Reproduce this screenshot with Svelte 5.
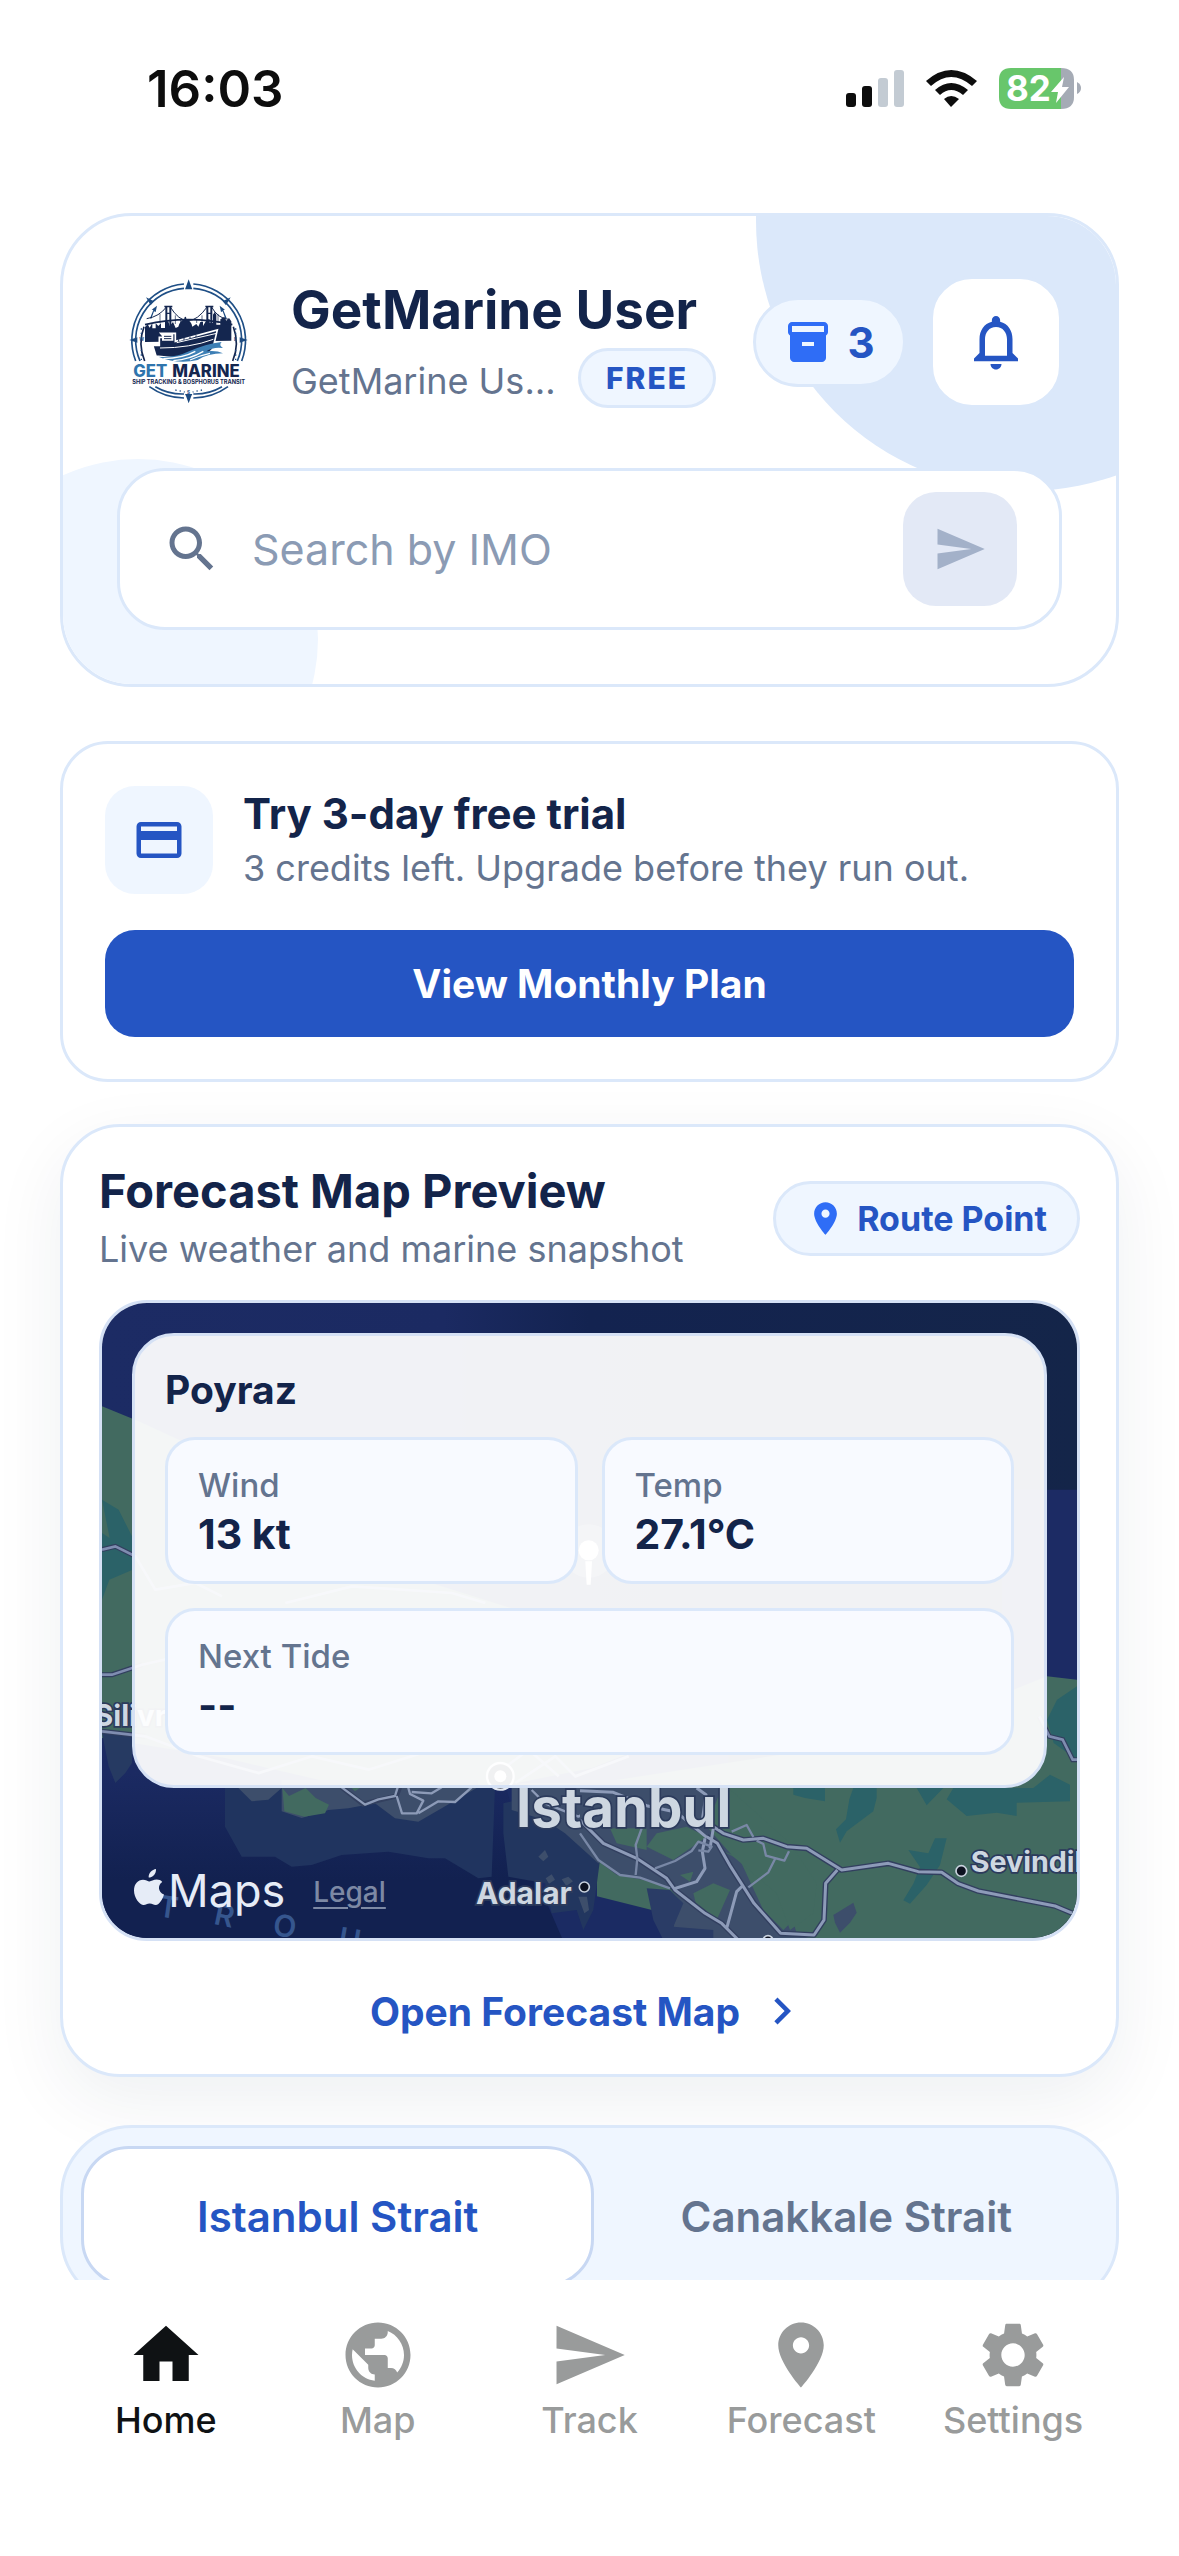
<script>
  const navItems = [
    { label: 'Home', icon: 'M10 20v-6h4v6h5v-8h3L12 3 2 12h3v8z' },
    {
      label: 'Map',
      icon: 'M12 2C6.48 2 2 6.48 2 12s4.48 10 10 10 10-4.48 10-10S17.52 2 12 2zm-1 17.93c-3.95-.49-7-3.85-7-7.93 0-.62.08-1.21.21-1.79L9 15v1c0 1.1.9 2 2 2v1.93zm6.9-2.54c-.26-.81-1-1.39-1.9-1.39h-1v-3c0-.55-.45-1-1-1H8v-2h2c.55 0 1-.45 1-1V7h2c1.1 0 2-.9 2-2v-.41c2.93 1.19 5 4.06 5 7.41 0 2.08-.8 3.97-2.1 5.39z'
    },
    { label: 'Track', icon: 'M2.01 21L23 12 2.01 3 2 10l15 2-15 2z' },
    {
      label: 'Forecast',
      icon: 'M12 2C8.13 2 5 5.13 5 9c0 5.25 7 13 7 13s7-7.75 7-13c0-3.87-3.13-7-7-7zm0 9.5c-1.38 0-2.5-1.12-2.5-2.5s1.12-2.5 2.5-2.5 2.5 1.12 2.5 2.5-1.12 2.5-2.5 2.5z'
    },
    {
      label: 'Settings',
      icon: 'M19.14 12.94c.04-.3.06-.61.06-.94 0-.32-.02-.64-.07-.94l2.03-1.58c.18-.14.23-.41.12-.61l-1.92-3.32c-.12-.22-.37-.29-.59-.22l-2.39.96c-.5-.38-1.03-.7-1.62-.94l-.36-2.54c-.04-.24-.24-.41-.48-.41h-3.84c-.24 0-.43.17-.47.41l-.36 2.54c-.59.24-1.13.57-1.62.94l-2.39-.96c-.22-.08-.47 0-.59.22L2.74 8.87c-.12.21-.08.47.12.61l2.03 1.58c-.05.3-.09.63-.09.94s.02.64.07.94l-2.03 1.58c-.18.14-.23.41-.12.61l1.92 3.32c.12.22.37.29.59.22l2.39-.96c.5.38 1.03.7 1.62.94l.36 2.54c.05.24.24.41.48.41h3.84c.24 0 .44-.17.47-.41l.36-2.54c.59-.24 1.13-.56 1.62-.94l2.39.96c.22.08.47 0 .59-.22l1.92-3.32c.12-.22.07-.47-.12-.61l-2.01-1.58zM12 15.6c-1.98 0-3.6-1.62-3.6-3.6s1.62-3.6 3.6-3.6 3.6 1.62 3.6 3.6-1.62 3.6-3.6 3.6z'
    }
  ];

  const straits = ['Istanbul Strait', 'Canakkale Strait'];

  const readings = [
    { label: 'Wind', value: '13 kt' },
    { label: 'Temp', value: '27.1°C' },
    { label: 'Next Tide', value: '--', wide: true }
  ];

  let activeTab = 'Home';
  let activeStrait = 'Istanbul Strait';
  let imo = '';
</script>

<div class="app">
  <div class="status-bar">
    <span class="time">16:03</span>
    <svg class="status-icons" viewBox="0 0 240 42" aria-hidden="true">
      <rect x="0" y="25" width="10" height="14" rx="3" fill="#0d0d0d" />
      <rect x="16" y="18" width="10" height="21" rx="3" fill="#0d0d0d" />
      <rect x="32" y="10" width="10" height="29" rx="3" fill="#c3cbd3" />
      <rect x="48" y="2" width="10" height="37" rx="3" fill="#c3cbd3" />
      <g fill="#0d0d0d">
        <path d="M80 13Q105-9 131 13L126 18Q105 0 85 18z" />
        <path d="M89 22Q105 8 122 22L117 27Q105 17 94 27z" />
        <path d="M98 31Q105 25 113 31L105 39z" />
      </g>
      <path d="M165 0h50v41h-50q-12 0-12-12V12q0-12 12-12z" fill="#68c66b" />
      <path d="M215 0q13 0 13 12v17q0 12-13 12z" fill="#a5abb5" />
      <path d="M231 14q4 2 4 6t-4 6z" fill="#a5abb5" />
      <text x="160" y="33" class="battery-text">82</text>
      <path d="M218 9l-13 15h7l-2 11 13-16h-7z" fill="#fff" />
    </svg>
  </div>

  <main>
    <header class="card profile">
      <div class="blob blob-top"></div>
      <div class="blob blob-bottom"></div>

      <div class="profile-row">
        <svg class="avatar" viewBox="21 30 432 432" role="img" aria-label="Get Marine">
          <g fill="none" stroke="#1f4f86" stroke-width="5">
            <path d="M77 303A170 170 0 0 1 222 72M250 72A170 170 0 0 1 395 303" />
            <path d="M90 303A156 156 0 0 1 222 85M250 85A156 156 0 0 1 382 303" />
            <path d="M118 380A180 180 0 0 0 222 414M250 414A180 180 0 0 0 354 380" />
            <path d="M136 380A160 160 0 0 0 222 402M250 402A160 160 0 0 0 336 380" />
            <path d="M104 303A140 140 0 0 1 102 200M368 303A140 140 0 0 0 370 200" stroke="#14264f" />
          </g>
          <g fill="#1c4a80">
            <path d="M236 58l8 22 3 8h-22l3-8zM236 430l-8-22-3-6h22l-3 6zM58 240l24-8v16zM413 240l-24-8v16z" />
            <path d="M108 112l24 12-10 12zM362 112l-24 12 10 12zM120 175l10-25-5-1 16-12-4 19-5-2-8 22zM350 175l-10-25 5-1-16-12 4 19 5-2 8 22z" />
          </g>
          <g fill="#14264f">
            <path d="M105 246v-45l8-8 6 10 8-14v16h10v-15l8 8 8-8v14h12v-20h10l4 14 10-12 8 18 8-4q5-18 18-22v-4q3-8 6 0v4q14 4 18 22l12-8 6 8 6-14h8v12l12-20h8v10h10v-24l5-8 5 8v30h12v-16l12-8 6 12 8-8 7 10v58z" />
            <path d="M166 140h6v70h-6zM178 140h6v70h-6zM289 140h6v70h-6zM301 140h6v70h-6zM163 137h24v5h-24zM286 137h24v5h-24zM172 158h8v4h-8zM295 158h8v4h-8z" />
          </g>
          <path d="M110 176q38-6 60-36M180 140q52 84 112 0M304 140q20 36 52 38" fill="none" stroke="#14264f" stroke-width="3" />
          <path d="M105 194q130-30 262 0" fill="none" stroke="#14264f" stroke-width="5" />
          <path d="M196 166v26M212 177v12M236 182v6M260 177v12M276 166v26M150 162v28M324 162v28" stroke="#14264f" stroke-width="2" />
          <path d="M128 256h20v-24h14l-10-12h44v24l126-34-14 58q-22 28-70 30l-100-10z" fill="#14264f" stroke="#fff" stroke-width="5" />
          <path d="M156 222h34v20h-34z" fill="#fff" />
          <path d="M162 229h22M162 236h22M206 238v16M222 234v16M240 230v16M258 226v16" stroke="#14264f" stroke-width="3" />
          <path d="M200 248l120-28M150 264q90 0 160-26" stroke="#fff" stroke-width="3" fill="none" />
          <path d="M145 290q52 4 92-16 50-22 98-28-10 10 4 18-30-4-50 10 30-4 50 6-46 0-76 20-60 14-118-10z" fill="#3d7fb5" />
          <path d="M160 296q60-2 96-22M190 302q50-4 90-28M240 300q30-14 60-20" stroke="#fff" stroke-width="4" fill="none" />
          <text x="70" y="350" class="logo-name" fill="#2f75ad">GET</text>
          <text x="187" y="350" class="logo-name" fill="#14264f">MARINE</text>
          <text x="236" y="373" class="logo-tag" text-anchor="middle">SHIP TRACKING &amp; BOSPHORUS TRANSIT</text>
          <g class="logo-mark">
            <text x="88" y="244">W</text>
            <text x="372" y="244">E</text>
            <text x="231" y="402">S</text>
          </g>
          <g fill="none" stroke="#1c4a80" stroke-width="4" stroke-dasharray="4 9">
            <path d="M94 270v30M94 205v24M377 270v30M377 205v24M196 390l28 6M276 390l-28 6" />
          </g>
        </svg>

        <div class="identity">
          <h1>GetMarine User</h1>
          <div class="plan-row">
            <span class="username">GetMarine User</span>
            <span class="badge">FREE</span>
          </div>
        </div>

        <button class="credits" type="button" aria-label="3 credits">
          <svg viewBox="0 0 24 24" aria-hidden="true">
            <path d="M20 2H4c-1 0-2 .9-2 2v3.01c0 .72.43 1.34 1 1.69V20c0 1.1 1.1 2 2 2h14c.9 0 2-.9 2-2V8.7c.57-.35 1-.97 1-1.69V4c0-1.1-1-2-2-2zm-5 12H9v-2h6v2zm5-7H4V4h16v3z" />
          </svg>
          <span>3</span>
        </button>

        <button class="bell" type="button" aria-label="Notifications">
          <svg viewBox="0 0 24 24" aria-hidden="true">
            <path d="M12 22c1.1 0 2-.9 2-2h-4c0 1.1.9 2 2 2zm6-6v-5c0-3.07-1.63-5.64-4.5-6.32V4c0-.83-.67-1.5-1.5-1.5s-1.5.67-1.5 1.5v.68C7.64 5.36 6 7.92 6 11v5l-2 2v1h16v-1l-2-2zm-2 1H8v-6c0-2.48 1.51-4.5 4-4.5s4 2.02 4 4.5v6z" />
          </svg>
        </button>
      </div>

      <form class="search" on:submit|preventDefault>
        <svg class="search-icon" viewBox="0 0 24 24" aria-hidden="true">
          <path d="M15.5 14h-.79l-.28-.27C15.41 12.59 16 11.11 16 9.5 16 5.91 13.09 3 9.5 3S3 5.91 3 9.5 5.91 16 9.5 16c1.61 0 3.09-.59 4.23-1.57l.27.28v.79l5 4.99L20.49 19l-4.99-5zm-6 0C7.01 14 5 11.99 5 9.5S7.01 5 9.5 5 14 7.01 14 9.5 11.99 14 9.5 14z" />
        </svg>
        <input type="text" placeholder="Search by IMO" aria-label="Search by IMO" bind:value={imo} />
        <button class="send" type="submit" aria-label="Search">
          <svg viewBox="0 0 24 24" aria-hidden="true">
            <path d="M2.01 21L23 12 2.01 3 2 10l15 2-15 2z" />
          </svg>
        </button>
      </form>
    </header>

    <section class="card trial">
      <div class="trial-row">
        <div class="trial-icon">
          <svg viewBox="0 0 24 24" aria-hidden="true">
            <path d="M20 4H4c-1.11 0-1.99.89-1.99 2L2 18c0 1.11.89 2 2 2h16c1.11 0 2-.89 2-2V6c0-1.11-.89-2-2-2zm0 14H4v-6h16v6zm0-10H4V6h16v2z" />
          </svg>
        </div>
        <div>
          <h2>Try 3-day free trial</h2>
          <p>3 credits left. Upgrade before they run out.</p>
        </div>
      </div>
      <button class="primary" type="button">View Monthly Plan</button>
    </section>

    <section class="card forecast">
      <div class="forecast-head">
        <div>
          <h2>Forecast Map Preview</h2>
          <p>Live weather and marine snapshot</p>
        </div>
        <button class="route-point" type="button">
          <svg viewBox="0 0 24 24" aria-hidden="true"><path d={navItems[3].icon} /></svg>
          Route Point
        </button>
      </div>

      <div class="map">
        <svg class="map-art" viewBox="0 0 2925 1905" preserveAspectRatio="xMidYMid slice" aria-hidden="true">
          <defs>
            <linearGradient id="sea" x1="0" y1="0" x2="1" y2="0">
              <stop offset="0" stop-color="#1c2b64" />
              <stop offset="0.35" stop-color="#1b2a62" />
              <stop offset="0.5" stop-color="#132350" />
              <stop offset="1" stop-color="#142549" />
            </linearGradient>
            <linearGradient id="deep" x1="0" y1="0" x2="0" y2="1">
              <stop offset="0" stop-color="#1c2b64" />
              <stop offset="0.3" stop-color="#1b2a62" />
              <stop offset="0.75" stop-color="#122150" />
            </linearGradient>
          </defs>
          <rect width="2925" height="1905" fill="url(#sea)" />
          <path d="M2700 560h225v700h-225z" fill="#1c2b64" />
          <path d="M0 1200h1500v705H0z" fill="url(#deep)" />
          <path d="M1180 1350h700v555h-500l-100-230z" fill="#1b2b63" />

          <!-- European side -->
          <path d="M0 310l110 45 130 60 400 260 300 150 350 110 200-20 60 120 20 320-100 40-300 60-500-20-300-70-370-60z" fill="#426a60" />
          <path d="M0 590l50 30 40 80v60l-60-20zM0 690l60 40 32 20v50l-70 30-22 60z" fill="#2b6268" />
          <path d="M0 1290l90 10v80l-20 30-30 30-20-50z" fill="#263a62" />

          <!-- Right shore -->
          <path d="M2925 1130l-90-10-100 40-200-20-400 200-650 100v340l500 125h940z" fill="#426a60" />
          <path d="M2925 1150l-60 40-30 60 20 70 70 50z" fill="#2b6268" />

          <!-- Marmara shallows -->
          <g transform="translate(-21 1371)">
            <path d="M390 80v120l50 90h100l50 30 60-5 90-30 140-10 120 20h50l100 60 40-5 10-270z" fill="#20345f" />
            <path d="M1225 130v90l15 130 110 20 20 90 75-10 20 60 30-60 40-300-150-60z" fill="#22365f" />
            <path d="M430 84l40 40 50-5 40-35zM560 84v70l60 20 80-24 60-5 80-15 60 45 70 10 70-40 110-64V60H560z" fill="#3d4e6b" />
            <path d="M562 84l6 70 60 16 62-10 12-26-40-20-30-30-50 24zM770 84h25l-15 10z" fill="#426a60" />
            <path d="M1250 70v80l100 30 60 40 100 90 100-60V70z" fill="#3d4e6b" />
            <path d="M1330 290l20-20 10 20-15 14zM1352 355l18-12 10 16-18 12zM1400 358l20-8 14 14-20 14zM1450 410l26 0 6 40-14 10z" fill="#3d4e6b" />
            <g fill="none" stroke="#33405f" stroke-width="15">
              <path d="M740 82l64 50 100-24 10-26" />
            </g>
            <g fill="none" stroke="#8d9bb8" stroke-width="7" stroke-linejoin="round">
              <path d="M740 82l70 52 40-16 50-10 8-26M905 108l16 52h44l20-38-40-20-6-22M970 160l60-36 50 2 50-44M950 96l60 4 30-18" />
              <path d="M1310 90l40 40 100 40 60-30" />
            </g>
          </g>

          <!-- Asian side -->
          <g transform="translate(1434 1371)">
            <path d="M0 60h420l70 140 100 120 60 200 50 20H270l30-120-30-35-80-25-80-15-60-45-50-70z" fill="#3d4e6b" />
            <path d="M200 385l70 5 40 40-30 70 120 10v30H250l-30-60z" fill="#2a3c66" />
            <path d="M90 205h110v65l-90-20zM230 220l90-20 60 30-100 70-80-40zM420 270l80 30 80 60 60 120-30 30-60-60-70-150zM340 400l60-30 50 20-40 90-60-40zM300 345l40-10-10 30z" fill="#426a60" />
            <path d="M430 70l200 180 80 120-10 90-70 50-40-110-130-110-80-90z" fill="#426a60" />
            <path d="M760 465l60-37 10 30-20 30-30 30-15-30z" fill="#3d4e6b" />
            <path d="M640 84h95v40l-60-10-35-10zM820 84h70v30l-10 40-80 60-20 34-12-40 30-30 10-60zM1010 84h80l-50 52zM1120 84h240l50-40 60 30v50l-160 4v40l-60-10-90 10-60-50zM985 270l60 10 20-45h35l-10 40-10 40-40 60-50 56-20-10 30-50 20-50z" fill="#2b6268" />
            <g fill="none" stroke="#323f5f" stroke-width="17" stroke-linejoin="round">
              <path d="M0 180l70 70 100 45 90 60 25 35 90 70 50 30 50 50" />
              <path d="M400 200l30 20 60 20 60-5 70 25 60 5 105 65 140-20 90 25 70 2 50 34 60 22 230 45 60 25" />
              <path d="M380 230l32 20 40 70 70 110 80 90 100 5 30-45 5-110 35-40" />
            </g>
            <g fill="none" stroke="#8d9bb8" stroke-width="9" stroke-linejoin="round">
              <path d="M0 180l70 70 100 45 90 60 25 35 90 70 50 30 50 50" />
              <path d="M0 92l100 5 100 40 90 20 90 75M375 235l-8 40 8 50-25 40-70 22M350 84l28 20-10 70" />
              <path d="M400 200l30 20 60 20 60-5 70 25 60 5 105 65 140-20 90 25 70 2 50 34 60 22 230 45 60 25" />
              <path d="M380 230l32 20 40 70 70 110 80 90 100 5 30-45 5-110 35-40M440 505l30-110 20-20M400 205l-10 60" />
            </g>
            <g fill="none" stroke="#7988a6" stroke-width="7" stroke-linejoin="round">
              <path d="M0 220l55 80 65 45 60 8 90 32M185 205l-18 50 5 40-5 50M225 325l60-22 50-30 20-28 40 15-10 15-30-4" />
              <path d="M455 215l45-20 20 36M530 242l20 10 8 35 55 15 14-28M585 297l-20 40-60 45" />
            </g>
            <circle cx="13" cy="381" r="15" fill="#0d1220" stroke="#c9d2de" stroke-width="5" />
            <circle cx="1144" cy="333" r="16" fill="#0d1220" stroke="#c9d2de" stroke-width="5" />
            <circle cx="564" cy="542" r="15" fill="#0d1220" stroke="#c9d2de" stroke-width="5" />
          </g>

          <g fill="none" stroke="#323f5f" stroke-width="15">
            <path d="M0 740l40-10 60 30M0 1115h30l90-30M0 1285l130 15M2812 1240l30 60 40 10 30 60h30" />
          </g>
          <g fill="none" stroke="#7f8db0" stroke-width="8">
            <path d="M0 740l40-10 60 30 60 100 120-20 80 40M0 1115h30l90-30 90-20M0 1285l130 15 160 60 180 50 160-50 170 40 160-50" />
            <path d="M550 900l200-50 300 20 100 30M1200 1400l80-60 90 80M1240 1440l120-80 60 60 160-60" />
            <path d="M2812 1240l30 60 40 10 30 60h30" />
          </g>

          <circle cx="1460" cy="744" r="80" fill="#fff" opacity="0.25" />
          <circle cx="1460" cy="742" r="30" fill="#fff" />
          <path d="M1450 775h20l-4 70h-12z" fill="#fff" />
          <circle cx="1195" cy="1420" r="40" fill="#0d1220" stroke="#e3e8f0" stroke-width="7" />
          <circle cx="1195" cy="1420" r="18" fill="#fff" />

          <g class="place">
            <text x="-24" y="1268" font-size="88">Silivri</text>
            <text x="1242" y="1571" font-size="164">Istanbul</text>
            <text x="1122" y="1804" font-size="90">Adalar</text>
            <text x="2606" y="1706" font-size="86">Sevindikli</text>
          </g>
          <g class="sea-name">
            <text x="165" y="1840" transform="rotate(8 165 1840)">T</text>
            <text x="332" y="1862" transform="rotate(12 332 1862)">R</text>
            <text x="510" y="1896" transform="rotate(8 510 1896)">O</text>
            <text x="705" y="1935" transform="rotate(10 705 1935)">U</text>
          </g>
        </svg>

        <div class="overlay">
          <h3>Poyraz</h3>
          <dl>
            {#each readings as reading}
              <div class="reading" class:wide={reading.wide}>
                <dt>{reading.label}</dt>
                <dd>{reading.value}</dd>
              </div>
            {/each}
          </dl>
        </div>

        <div class="attribution">
          <svg viewBox="0 0 30 37" aria-hidden="true">
            <path d="M22 0c.4 5-3.6 8.6-7.3 8.6C14.2 4 18.2.6 22 0zM28.3 12.900c-5 3-4.300 10.200 1.700 12.600-1.300 4.300-4.500 10.500-8.300 10.500-2.400 0-3.200-1.500-6-1.500-2.900 0-3.700 1.500-6 1.500C5.500 36 0 28.500 0 21.500c0-6.300 4-10.700 9-10.700 2.700 0 4.800 1.700 6.500 1.700 1.600 0 4-1.900 7.200-1.900 2.200 0 4.200.8 5.600 2.300z" />
          </svg>
          <span>Maps</span>
          <a href="#legal">Legal</a>
        </div>
      </div>

      <button class="open-map" type="button">
        Open Forecast Map
        <svg viewBox="0 0 24 24" aria-hidden="true"><path d="M10 6L8.59 7.41 13.17 12l-4.580 4.590L10 18l6-6z" /></svg>
      </button>
    </section>

    <div class="straits">
      {#each straits as strait}
        <button
          type="button"
          class:selected={strait === activeStrait}
          on:click={() => (activeStrait = strait)}>{strait}</button
        >
      {/each}
    </div>
  </main>

  <nav>
    {#each navItems as item}
      <button
        type="button"
        class:active={item.label === activeTab}
        on:click={() => (activeTab = item.label)}
      >
        <svg viewBox="0 0 24 24" aria-hidden="true"><path d={item.icon} /></svg>
        <span>{item.label}</span>
      </button>
    {/each}
  </nav>
</div>

<style>
  :global(body) {
    margin: 0;
    background: #fff;
  }

  .app {
    display: flex;
    flex-direction: column;
    height: 100vh;
    overflow: hidden;
    background: #fff;
    color: #13244a;
    font-family: Inter, 'Liberation Sans', sans-serif;
  }

  h1,
  h2,
  h3,
  p,
  dl,
  dd {
    margin: 0;
  }

  button {
    border: none;
    padding: 0;
    background: none;
    color: inherit;
    font-family: inherit;
    cursor: pointer;
  }

  svg {
    display: block;
    flex-shrink: 0;
    fill: currentColor;
  }

  .status-bar {
    display: flex;
    flex-shrink: 0;
    align-items: center;
    justify-content: space-between;
    height: 177px;
    padding: 0 93px 0 147px;
    box-sizing: border-box;
  }

  .time {
    color: #0d0d0d;
    font-size: 51px;
    font-weight: 600;
  }

  .status-icons {
    width: 240px;
    height: 42px;
  }

  .battery-text {
    fill: #fff;
    font-size: 35px;
    font-weight: 700;
  }

  main {
    flex: 1;
    min-height: 0;
    padding: 36px 60px 0;
    overflow: hidden;
  }

  .card {
    border: 3px solid #dbe8fa;
    background: #fff;
  }

  .profile {
    position: relative;
    padding: 54px;
    border-radius: 72px;
    overflow: hidden;
  }

  .blob {
    position: absolute;
    border-radius: 50%;
  }

  .blob-top {
    top: -265px;
    right: -180px;
    width: 540px;
    height: 540px;
    background: #dbe8fa;
  }

  .blob-bottom {
    bottom: -135px;
    left: -105px;
    width: 360px;
    height: 360px;
    background: #eff6ff;
  }

  .profile-row {
    position: relative;
    display: flex;
    align-items: center;
    margin-bottom: 54px;
  }

  .avatar {
    width: 144px;
    height: 144px;
    margin-right: 30px;
  }

  .logo-name {
    font-size: 50px;
    font-weight: 800;
  }

  .logo-tag {
    fill: #14264f;
    font-size: 17px;
    font-weight: 700;
  }

  .logo-mark {
    fill: #1c4a80;
    font-size: 14px;
    font-weight: 700;
  }

  .identity {
    flex: 1;
    min-width: 0;
  }

  h1 {
    font-size: 53px;
    font-weight: 700;
    line-height: 68px;
    white-space: nowrap;
  }

  .plan-row {
    display: flex;
    align-items: center;
    gap: 21px;
    margin-top: 4px;
  }

  .username {
    max-width: 266px;
    padding-top: 5px;
    overflow: hidden;
    color: #64748f;
    font-size: 36px;
    line-height: 48px;
    text-overflow: ellipsis;
    white-space: nowrap;
  }

  .badge {
    padding: 0 25px;
    border: 3px solid #dbe8fa;
    border-radius: 30px;
    background: #eff6ff;
    color: #2555c3;
    font-size: 30px;
    font-weight: 800;
    letter-spacing: 2px;
    line-height: 54px;
  }

  .credits {
    display: flex;
    align-items: center;
    justify-content: center;
    gap: 15px;
    width: 153px;
    height: 90px;
    margin-right: 24px;
    border: 3px solid #dbe8fa;
    border-radius: 45px;
    background: #eff6ff;
    color: #2555c3;
    font-size: 42px;
    font-weight: 700;
  }

  .credits svg {
    width: 48px;
    height: 48px;
    color: #2f6df6;
  }

  .bell {
    display: flex;
    align-items: center;
    justify-content: center;
    width: 132px;
    height: 132px;
    border: 3px solid #dbe8fa;
    border-radius: 42px;
    background: #fff;
    color: #2555c3;
  }

  .bell svg {
    width: 66px;
    height: 66px;
  }

  .search {
    position: relative;
    display: flex;
    align-items: center;
    padding: 21px 42px;
    border: 3px solid #dbe8fa;
    border-radius: 48px;
    background: #fff;
  }

  .search-icon {
    width: 60px;
    height: 60px;
    color: #64748f;
  }

  .search input {
    flex: 1;
    min-width: 0;
    padding: 0 30px;
    border: none;
    outline: none;
    background: none;
    color: #13244a;
    font-family: inherit;
    font-size: 43px;
  }

  .search input::placeholder {
    color: #8b9bb4;
    opacity: 1;
  }

  .send {
    display: flex;
    align-items: center;
    justify-content: center;
    width: 114px;
    height: 114px;
    border-radius: 33px;
    background: #e3e9f6;
    color: #a3b1c9;
  }

  .send svg {
    width: 54px;
    height: 54px;
  }

  .trial {
    margin-top: 54px;
    padding: 42px;
    border-radius: 48px;
  }

  .trial-row {
    display: flex;
    align-items: center;
    gap: 30px;
    margin-bottom: 36px;
  }

  .trial-icon {
    display: flex;
    align-items: center;
    justify-content: center;
    width: 108px;
    height: 108px;
    border-radius: 30px;
    background: #eff6ff;
    color: #2555c3;
  }

  .trial-icon svg {
    width: 54px;
    height: 54px;
  }

  .trial h2 {
    font-size: 42px;
    font-weight: 700;
    line-height: 56px;
  }

  p {
    color: #64748f;
    font-size: 36px;
    line-height: 54px;
  }

  .primary {
    display: block;
    width: 100%;
    height: 107px;
    border-radius: 30px;
    background: #2555c3;
    color: #fff;
    font-size: 39px;
    font-weight: 700;
  }

  .trial p {
    line-height: 52px;
  }

  .forecast {
    margin-top: 42px;
    padding: 33px 36px 36px;
    border-radius: 60px;
    box-shadow: 0 24px 72px rgba(19, 36, 74, 0.07);
  }

  .forecast-head {
    display: flex;
    align-items: center;
    justify-content: space-between;
    margin-bottom: 24px;
  }

  .forecast h2 {
    font-size: 47px;
    font-weight: 700;
    line-height: 62px;
  }

  .route-point {
    display: flex;
    align-items: center;
    gap: 12px;
    height: 75px;
    padding: 0 30px;
    border: 3px solid #dbe8fa;
    border-radius: 38px;
    background: #eff6ff;
    color: #2555c3;
    font-size: 34px;
    font-weight: 700;
  }

  .route-point svg {
    width: 39px;
    height: 39px;
    color: #2f6df6;
  }

  .map {
    position: relative;
    padding: 30px 30px 18px;
    border: 3px solid #d5e1f5;
    border-radius: 48px;
    overflow: hidden;
  }

  .map-art {
    position: absolute;
    inset: 0;
    width: 100%;
    height: 100%;
  }

  .place {
    fill: #ced7e1;
    stroke: #2c3b5c;
    stroke-width: 10px;
    paint-order: stroke;
    font-weight: 700;
  }

  .sea-name {
    fill: #36568e;
    font-size: 90px;
    font-weight: 600;
  }

  .overlay {
    position: relative;
    padding: 30px;
    border: 3px solid #d5e1f5;
    border-radius: 42px;
    background: rgba(255, 255, 255, 0.94);
  }

  h3 {
    margin-bottom: 23px;
    font-size: 39px;
    font-weight: 700;
    line-height: 48px;
  }

  dl {
    display: grid;
    grid-template-columns: 1fr 1fr;
    gap: 24px;
  }

  .reading {
    padding: 21px 30px;
    border: 3px solid #dbe8fa;
    border-radius: 30px;
    background: #f8faff;
  }

  .wide {
    grid-column: span 2;
  }

  dt {
    color: #64748f;
    font-size: 33px;
    font-weight: 500;
    line-height: 48px;
  }

  dd {
    font-size: 41px;
    font-weight: 700;
    line-height: 51px;
  }

  .attribution {
    position: relative;
    display: flex;
    align-items: center;
    height: 60px;
    padding-top: 72px;
    color: #e6ecf7;
    font-size: 45px;
  }

  .attribution svg {
    width: 30px;
    height: 37px;
    margin: 0 4px 6px 2px;
  }

  .attribution a {
    margin: 4px 0 0 28px;
    color: #7d89a4;
    font-size: 28px;
    font-weight: 500;
    text-underline-offset: 5px;
  }

  .open-map {
    display: flex;
    align-items: center;
    justify-content: center;
    gap: 15px;
    width: 100%;
    height: 54px;
    margin-top: 43px;
    color: #2555c3;
    font-size: 39px;
    font-weight: 700;
  }

  .open-map svg {
    width: 54px;
    height: 54px;
  }

  .straits {
    display: flex;
    margin-top: 48px;
    padding: 18px;
    border: 3px solid #dbe8fa;
    border-radius: 72px;
    background: #eff6ff;
  }

  .straits button {
    flex: 1;
    height: 141px;
    border: 3px solid transparent;
    border-radius: 48px;
    color: #64748f;
    font-size: 42px;
    font-weight: 600;
  }

  .straits .selected {
    flex: 1.02;
    border-color: #c8d8f3;
    background: #fff;
    color: #2555c3;
  }

  nav {
    display: flex;
    flex-shrink: 0;
    height: 276px;
    padding: 36px 60px 0;
    box-sizing: border-box;
    background: #fff;
  }

  nav button {
    display: flex;
    flex: 1;
    flex-direction: column;
    align-items: center;
    gap: 2px;
    color: #999b9b;
    font-size: 36px;
    font-weight: 500;
    line-height: 48px;
  }

  nav svg {
    width: 78px;
    height: 78px;
  }

  nav .active {
    color: #0f1214;
  }
</style>
